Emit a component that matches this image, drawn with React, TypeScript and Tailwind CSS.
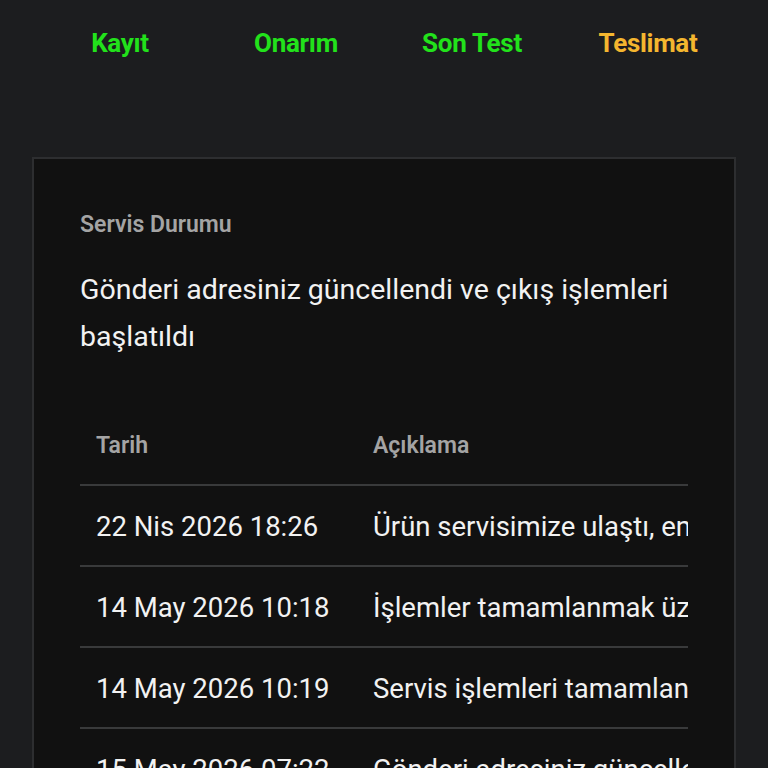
const steps = [
  { label: 'Kayıt', color: 'text-[#22e21b]' },
  { label: 'Onarım', color: 'text-[#22e21b]' },
  { label: 'Son Test', color: 'text-[#22e21b]' },
  { label: 'Teslimat', color: 'text-[#f4b62f]' },
];

const history = [
  { date: '22 Nis 2026 18:26', text: 'Ürün servisimize ulaştı, en kısa sürede incelenecektir' },
  { date: '14 May 2026 10:18', text: 'İşlemler tamamlanmak üzere test aşamasına alındı' },
  { date: '14 May 2026 10:19', text: 'Servis işlemleri tamamlandı' },
  { date: '15 May 2026 07:22', text: 'Gönderi adresiniz güncellendi ve çıkış işlemleri başlatıldı' },
];

export default function App() {
  return (
    <div
      className="min-h-[768px] bg-[#1c1d1f] px-8 text-[#f2f2f2]"
      style={{ fontFamily: 'Roboto, "Noto Sans", sans-serif' }}
    >
      {/* Progress steps */}
      <nav className="grid h-[86px] grid-cols-4 items-center">
        {steps.map((s) => (
          <div key={s.label} className={`text-center text-[26px] font-bold tracking-[-0.3px] ${s.color}`}>
            {s.label}
          </div>
        ))}
      </nav>

      {/* Status card */}
      <div className="mt-[71px] border-2 border-[#2d2e30] bg-[#111111] p-[46px]">
        <h2 className="text-[23px] font-semibold leading-[40px] text-[#a4a4a4]">Servis Durumu</h2>
        <p className="mt-[21px] text-[28.5px] leading-[47px]">
          Gönderi adresiniz güncellendi ve çıkış işlemleri başlatıldı
        </p>

        <div className="mt-[44px] overflow-hidden">
          <table className="w-max border-collapse whitespace-nowrap text-left">
            <thead>
              <tr className="border-b-2 border-[#393a3b]">
                <th className="h-[81px] w-[277px] px-4 pt-[4px] text-[23px] font-semibold text-[#a4a4a4]">Tarih</th>
                <th className="h-[81px] px-4 pt-[4px] text-[23px] font-semibold text-[#a4a4a4]">Açıklama</th>
              </tr>
            </thead>
            <tbody>
              {history.map((row) => (
                <tr key={row.date} className="border-b-2 border-[#393a3b]">
                  <td className="h-[81px] px-4 pt-[3px] text-[27.5px]">{row.date}</td>
                  <td className="h-[81px] px-4 pt-[3px] text-[27.5px]">{row.text}</td>
                </tr>
              ))}
            </tbody>
          </table>
        </div>
      </div>
    </div>
  );
}
